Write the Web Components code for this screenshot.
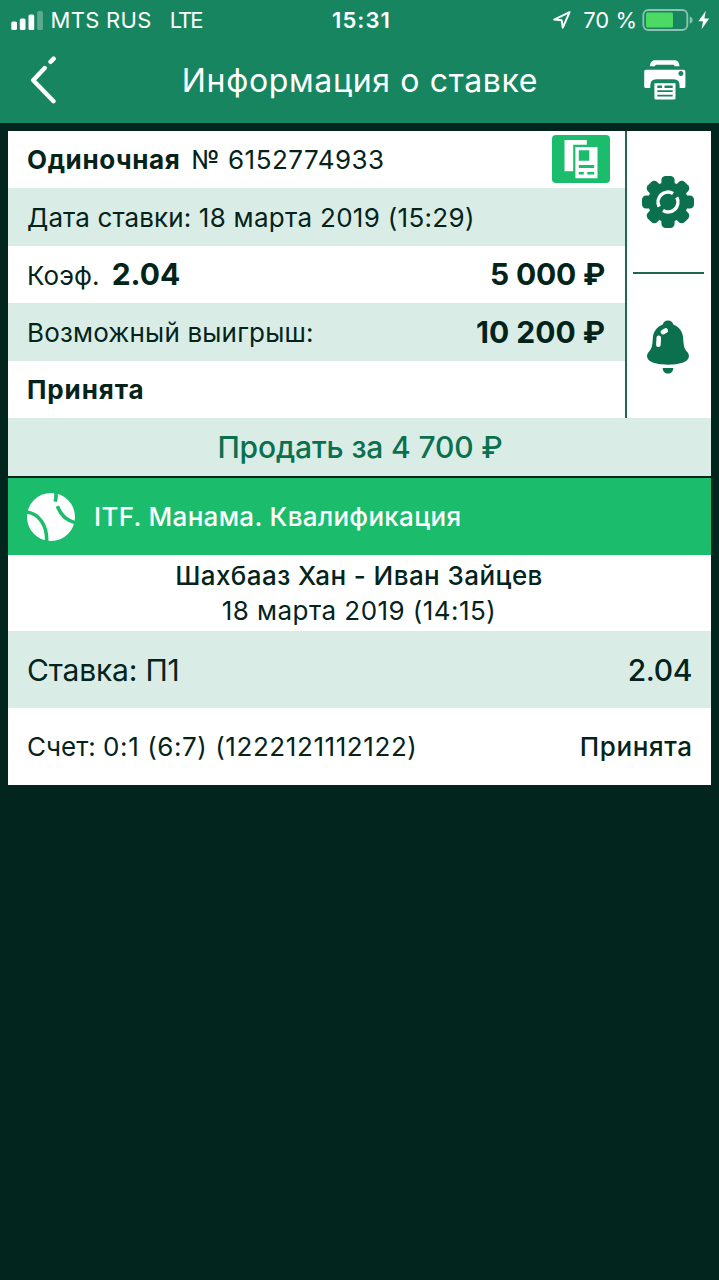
<!DOCTYPE html>
<html lang="ru">
<head>
<meta charset="utf-8">
<title>Информация о ставке</title>
<style>
html,body{margin:0;height:100%;background:#02261d}
body{font-family:Inter,"Noto Sans",sans-serif;color:#04241b}
</style>
</head>
<body>
<bet-screen></bet-screen>
<script>
const define = (name, html, setup) => {
  const tpl = document.createElement('template');
  tpl.innerHTML = html;
  customElements.define(name, class extends HTMLElement {
    constructor() {
      super();
      this.attachShadow({mode: 'open'}).append(tpl.content.cloneNode(true));
    }
    connectedCallback() { if (setup) setup(this); }
  });
};

const gearTeeth = Array.from({length: 8}, (_, i) =>
  `<rect x="-6.6" y="-26" width="13.2" height="16" rx="4.2" transform="rotate(${i * 45})"/>`).join('');

// Each icon: width, height, SVG body
const icons = {
  signal: [32, 19, `<g fill="#fff"><rect x=".3" y="10.5" width="5.7" height="8.5" rx="1.6"/><rect x="8.8" y="7.5" width="5.7" height="11.5" rx="1.6"/><rect x="17.5" y="3.5" width="5.7" height="15.5" rx="1.6"/><rect x="26.2" y="0" width="5.7" height="19" rx="1.6" opacity=".3"/></g>`],
  locate: [20, 20, `<path d="M17.6 2.2 2.2 9.6 9.6 10.2 10.8 17.6Z" fill="none" stroke="#fff" stroke-width="2" stroke-linejoin="round"/>`],
  battery: [52, 22, `<rect x="1.3" y="1" width="44" height="20" rx="5" fill="none" stroke="#fff" stroke-opacity=".5" stroke-width="1.8"/><rect x="4" y="3.4" width="27" height="15.2" rx="1.5" fill="#4cd964"/><path d="M47.7 7.5c2 .6 3 2 3 3.6s-1 3-3 3.6Z" fill="#fff" opacity=".5"/>`],
  bolt: [12, 20, `<path d="M7.8.8.4 11.2H5L3.6 19.2 11.2 8.4H6.4Z" fill="#fff"/>`],
  back: [28, 48, `<path d="M14.7 12 3.2 24.2 23.5 45.2M20.5 5.800 23.700 2.700" fill="none" stroke="#fff" stroke-width="4.4" stroke-linecap="round" stroke-linejoin="round"/>`],
  printer: [42, 40, `<g fill="#fff"><path d="M6 6.3C6.2 2.5 7.8.2 11 .2H30.5C33.7.2 35.3 2.5 35.5 6.3H30.7C30.5 5.2 29.9 4.7 29 4.7H12.5C11.6 4.7 11 5.2 10.8 6.3Z"/><path fill-rule="evenodd" d="M2 9.7H39.6Q41.4 9.7 41.4 11.5V26.5Q41.4 28 39.9 28H35.6V25.5Q35.6 19.3 29.6 19.3H12.3Q6.3 19.3 6.3 25.5V28H1.8Q.2 28 .2 26.5V11.5Q.2 9.7 2 9.7ZM36.9 11.1a2.5 2.5 0 1 0 .01 0Z"/><path fill-rule="evenodd" d="M10.4 23.2H31.5V38Q31.5 39.5 30 39.5H11.9Q10.4 39.5 10.4 38ZM13.3 25.5V28H18V25.5ZM20.5 25.5V28H28.7V25.5ZM13.3 30.3V32.1H28.7V30.3ZM13.3 34.7V36.5H28.7V34.7Z"/></g>`],
  copy: [58, 48, `<rect width="58" height="48" rx="4" fill="#1bbd6c"/><path fill="#fff" d="M12.5 5H34.8V9.7H21.2V36.3H12.5Z"/><path fill="#fff" fill-rule="evenodd" d="M23.4 12H45.5V43.3H23.4ZM26.8 15.3V25.8H37.3V15.3ZM26.8 30V32.9H42.2V30ZM26.8 37V39.5H31.8V37ZM35.3 37V39.5H42.2V37Z"/>`],
  gear: [52, 52, `<g transform="translate(26 26)"><g fill="#0b704e">${gearTeeth}<circle r="20"/></g><g fill="none" stroke="#fff" stroke-width="3.5"><path d="M5-8.6A9.95 9.95 0 0 0-8.8 4.6"/><path d="M-5 8.6A9.95 9.95 0 0 0 8.8-4.6"/></g></g>`],
  bell: [44, 54, `<path fill="#0b704e" d="M22 .5C25 .5 27 2.3 27.2 4.6C33.5 7 36.8 12 37.2 18.5C37.6 26 38.3 29 41.5 32.3C43.6 34.8 43.5 38.5 40.5 40.8C36 43.8 29 44.7 22 44.7S8 43.8 3.5 40.8C.5 38.5.4 34.8 2.5 32.3C5.7 29 6.4 26 6.8 18.5C7.2 12 10.5 7 16.8 4.6C17 2.3 19 .5 22 .5ZM16.7 48H27.3C27.3 51.5 25 53.5 22 53.5S16.7 51.5 16.7 48Z"/><g fill="#fff"><rect x="10.3" y="15.5" width="4.6" height="11.5" rx="2.2" transform="rotate(3 12.6 21)"/><rect x="14.5" y="8.9" width="7.6" height="4.8" rx="2.2" transform="rotate(-28 18.3 11.3)"/></g>`],
  tennis: [48, 48, `<circle cx="24" cy="24" r="24" fill="#fff"/><g fill="none" stroke="#1bbd6c" stroke-width="3.6"><path d="M-1 18.8C12 20.5 20.5 32 19.6 49"/><path d="M30.5 13.2C33.3 21.5 39 27.5 49 29.8"/><path d="M29-1V4.5L28.2 8.6"/></g>`]
};
define('bet-icon', `<style>:host{display:block;flex:none}svg{display:block}</style>`, el => {
  if (el.shadowRoot.querySelector('svg')) return;
  const [w, h, body] = icons[el.getAttribute('name')];
  const holder = document.createElement('template');
  holder.innerHTML = `<svg width="${w}" height="${h}" viewBox="0 0 ${w} ${h}">${body}</svg>`;
  el.shadowRoot.append(holder.content);
});

define('status-bar', `<style>
:host{display:grid;grid-template-columns:1fr auto 1fr;height:40px;align-items:center;color:#fff;font-size:22px;line-height:40px;white-space:pre}
div{display:flex;align-items:center}
.l{padding-left:11px}.r{justify-content:flex-end;padding-right:9px}
b{font-weight:600;letter-spacing:1.1px;margin-left:4px}
</style>
<div class="l"><bet-icon name="signal"></bet-icon><span style="margin-left:7.5px;letter-spacing:.3px">MTS RUS</span><span style="margin-left:18px;letter-spacing:-1.9px">LTE</span></div>
<b>15:31</b>
<div class="r"><bet-icon name="locate"></bet-icon><span style="margin-left:11px">70 %</span><bet-icon name="battery" style="margin-left:5px"></bet-icon><bet-icon name="bolt" style="margin-left:4px"></bet-icon></div>`);

define('title-bar', `<style>
:host{display:grid;grid-template-columns:60px 1fr 60px;height:83px;color:#fff;box-sizing:border-box}
h1{margin:0;font-size:32px;font-weight:400;letter-spacing:.65px;line-height:81px;text-align:center;padding-left:1px;white-space:nowrap}
.b{margin:16px 0 0 30px}.p{margin:20px 0 0 -15.5px}
</style>
<bet-icon class="b" name="back"></bet-icon><h1><slot></slot></h1><bet-icon class="p" name="printer"></bet-icon>`);

define('info-row', `<style>
:host{display:flex;align-items:center;justify-content:space-between;box-sizing:border-box;padding:0 20px 0 19px;background:#fff;font-size:26px;white-space:pre}
:host([tint]){background:#d9ede6}
:host([center]){justify-content:center}
</style><slot></slot>`);

define('side-tools', `<style>
:host{display:grid;grid-template-rows:141px 1fr;background:#fff;border-left:2px solid #1f6653;padding:0 7px 0 6px}
div{display:flex;justify-content:center;align-items:center;padding:1px 2px 0 0}
div+div{border-top:2px solid #1f6653}
</style><div><bet-icon name="gear"></bet-icon></div><div><bet-icon name="bell"></bet-icon></div>`);

define('bet-summary', `<style>
:host{display:grid;grid-template-columns:617px 1fr;grid-template-rows:57px 58px 57px 58px 57px 58px}
b{font-weight:700}.big{font-size:30px}
side-tools{grid-column:2;grid-row:1/6}
.sell{grid-column:1/3;color:#0b704e;font-size:30px;font-weight:500;letter-spacing:-.14px}
</style>
<info-row style="padding-right:15px"><span><b style="letter-spacing:.6px">Одиночная</b><span style="margin-left:11px;letter-spacing:.48px">№ 6152774933</span></span><bet-icon name="copy" style="margin-bottom:2px"></bet-icon></info-row>
<side-tools></side-tools>
<info-row tint><span style="letter-spacing:.1px">Дата ставки: <span style="letter-spacing:.3px">18 марта 2019 (15:29)</span></span></info-row>
<info-row style="padding-bottom:2px"><span><span style="letter-spacing:.1px">Коэф.</span><b class="big" style="margin-left:12px">2.04</b></span><b class="big" style="letter-spacing:-.2px">5 000 ₽</b></info-row>
<info-row tint><span style="letter-spacing:.17px">Возможный выигрыш:</span><b class="big">10 200 ₽</b></info-row>
<info-row><b style="letter-spacing:.9px">Принята</b></info-row>
<info-row tint center class="sell"><span style="margin-left:2px">Продать за 4 700 ₽</span></info-row>`);

define('bet-event', `<style>
:host{display:grid;grid-template-rows:77px 76px 77px 77px;margin-top:2px}
.league{background:#1bbd6c;color:#fff;font-weight:500;justify-content:flex-start;letter-spacing:.3px}
.m{font-weight:500}.big{font-size:30px}
.match{display:grid;justify-content:center;justify-items:center;line-height:35px;align-content:center}
</style>
<info-row class="league"><bet-icon name="tennis"></bet-icon><span style="margin-left:19px">ITF. Манама. Квалификация</span></info-row>
<info-row class="match"><span class="m" style="letter-spacing:.42px">Шахбааз Хан - Иван Зайцев</span><span style="letter-spacing:.45px">18 марта 2019 (14:15)</span></info-row>
<info-row tint class="big"><span style="letter-spacing:-.18px">Ставка: П1</span><span class="m" style="letter-spacing:-.38px;margin-right:-1px">2.04</span></info-row>
<info-row><span>Счет: <span style="letter-spacing:.58px">0:1 (6:7) (1222121112122)</span></span><span class="m" style="letter-spacing:.6px;margin-right:-1.5px">Принята</span></info-row>`);

define('bet-screen', `<style>
:host{display:block}
header{background:#178660;height:123px}
main{margin:8px 8px 0}
</style>
<header><status-bar></status-bar><title-bar>Информация о ставке</title-bar></header>
<main><bet-summary></bet-summary><bet-event></bet-event></main>`);
</script>
</body>
</html>
